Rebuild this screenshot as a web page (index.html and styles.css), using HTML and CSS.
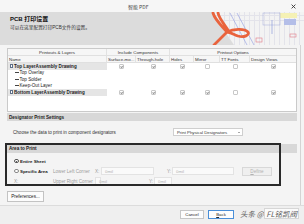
FILE: index.html
```html
<!DOCTYPE html>
<html>
<head>
<meta charset="utf-8">
<title>智能 PDF</title>
<link rel="stylesheet" href="styles.css">
</head>
<body>
<div class="window">
  <div class="titlebar">
    <span class="title">智能 PDF</span>
    <svg class="close" width="5" height="5" viewBox="0 0 5 5"><path d="M0.6 0.6 L4.4 4.4 M4.4 0.6 L0.6 4.4" stroke="#333" stroke-width="0.9" fill="none"/></svg>
  </div>
  <div class="header">
    <div class="header-text">
      <div class="h-title">PCB 打印设置</div>
      <div class="h-sub">可以在这里配置打印PCB文件的设置。</div>
    </div>
    <div class="art">
      <div class="art-light"></div>
      <svg class="art-svg" width="104" height="33" viewBox="0 0 104 33">
        <line x1="30" y1="1" x2="47" y2="33" stroke="#8e9be0" stroke-width="0.6"/>
        <line x1="37" y1="1" x2="54" y2="33" stroke="#8e9be0" stroke-width="0.6"/>
        <rect x="80" y="1" width="17" height="5" fill="#f5f1b4"/>
        <rect x="84" y="7" width="12" height="6" fill="#b4bee8"/>
        <rect x="63" y="1" width="17" height="12" fill="none" stroke="#a2aadb" stroke-width="0.5"/>
        <line x1="72" y1="8" x2="72" y2="22" stroke="#8090d8" stroke-width="0.6"/>
        <rect x="56" y="26" width="6" height="4" fill="none" stroke="#e27a86" stroke-width="0.6"/>
        <rect x="90" y="22" width="6" height="3" fill="none" stroke="#e27a86" stroke-width="0.6"/>
        <path d="M13 1 C15 8 22 14 27 20 M18 1 C19 6 24 12 28 18 M27 20 C33 17 44 16 48 20 C50 23 44 26 38 24 C33 22 29 20 27 20 M27 20 C23 24 18 29 14 33" fill="none" stroke="#e9633d" stroke-width="2.8" stroke-linecap="round" stroke-linejoin="round"/>
      </svg>
    </div>
  </div>
  <div class="content">
    <div class="panel">
      <div class="grid">
        <div class="th c">Printouts &amp; Layers</div>
        <div class="th c span2">Include Components</div>
        <div class="th c span4">Printout Options</div>

        <div class="th">Name</div>
        <div class="th">Surface-mo...</div>
        <div class="th">Through-hole</div>
        <div class="th">Holes</div>
        <div class="th">Mirror</div>
        <div class="th">TT Fonts</div>
        <div class="th last">Design Views</div>

        <div class="td name sel"><span class="tree"></span><b>Top LayerAssembly Drawing</b></div>
        <div class="td cbx"><span class="cb on"></span></div>
        <div class="td cbx"><span class="cb on"></span></div>
        <div class="td cbx"><span class="cb on"></span></div>
        <div class="td cbx"><span class="cb"></span></div>
        <div class="td cbx"><span class="cb"></span></div>
        <div class="td cbx"><span class="cb on"></span></div>

        <div class="td name full"><span class="dash"></span>Top Overlay</div>
        <div class="td name full"><span class="dash"></span>Top Solder</div>
        <div class="td name full"><span class="dash"></span>Keep-Out Layer</div>

        <div class="td name sel"><span class="tree"></span><b>Bottom LayerAssembly Drawing</b></div>
        <div class="td cbx"><span class="cb on"></span></div>
        <div class="td cbx"><span class="cb on"></span></div>
        <div class="td cbx"><span class="cb on"></span></div>
        <div class="td cbx"><span class="cb on"></span></div>
        <div class="td cbx"><span class="cb"></span></div>
        <div class="td cbx"><span class="cb on"></span></div>
      </div>
    </div>

    <div class="bar">Designator Print Settings</div>
    <div class="drow">
      <span>Choose the data to print in component designators</span>
      <div class="select"><span>Print Physical Designators</span><span class="caret"></span></div>
    </div>

    <div class="bar tall">Area to Print</div>
    <div class="area">
      <div class="opt"><span class="radio on"></span><span class="optl">Entire Sheet</span></div>
      <div class="opt r2"><span class="radio"></span><span class="optl">Specific Area</span></div>
      <div class="lbl r2">Lower Left Corner</div>
      <div class="lbl r2">X:</div>
      <div class="inp r2">0mil</div>
      <div class="lbl ylab r2">Y:</div>
      <div class="inp r2">0mil</div>
      <div class="define r2"><u>D</u>efine</div>
      <div class="lbl r3 cB">Upper Right Corner</div>
      <div class="lbl r3">X:</div>
      <div class="inp r3">0mil</div>
      <div class="lbl ylab r3">Y:</div>
      <div class="inp r3">0mil</div>
    </div>

    <button class="btn pref">Preferences...</button>
  </div>
  <div class="footer">
    <button class="fbtn cancel">Cancel</button>
    <button class="fbtn back"><u>B</u>ack</button>
    <span class="wm">头条 @<span class="wm-box">FL铭凯阀</span></span>
  </div>
  <div class="focus-box"></div>
</div>
</body>
</html>
```

FILE: styles.css
```css
* { box-sizing: border-box; margin: 0; padding: 0; }
html, body { width: 304px; height: 224px; overflow: hidden; }
body {
  font-family: "Liberation Sans", "Noto Sans CJK SC", sans-serif;
  font-size: 4.6px;
  color: #222;
  background: #f4f4f4;
}
button { font-family: inherit; font-size: inherit; color: inherit; }
.window { position: relative; width: 304px; height: 224px; display: flex; flex-direction: column; }

.titlebar {
  flex: none; height: 12px; background: #f6f6f6;
  display: flex; align-items: center;
  padding: 0 8px 0 128px;
}
.title { font-size: 5px; color: #444; font-family: "Noto Sans CJK SC", "Liberation Sans", sans-serif; }
.close { margin-left: auto; }

.header {
  flex: none; height: 33px; background: #dcdcdc;
  display: grid; grid-template-columns: 200px 104px;
}
.header-text { padding: 4px 0 0 10px; }
.h-title { font-size: 6px; line-height: 7px; font-weight: bold; color: #111; }
.h-sub { font-size: 4.7px; line-height: 6px; margin-top: 2px; color: #333; }
.art { position: relative; height: 33px; overflow: hidden; }
.art-light {
  height: 33px;
  background:
    repeating-linear-gradient(90deg, transparent 0 4.5px, #e3e3ea 4.5px 5px),
    repeating-linear-gradient(0deg, transparent 0 4.5px, #e3e3ea 4.5px 5px),
    #f3f3f3;
  clip-path: polygon(12px 0, 104px 0, 104px 33px, 34px 33px);
}
.art-svg { position: absolute; left: 0; top: 0; }

.content {
  flex: 1; display: flex; flex-direction: column; align-items: stretch;
  padding: 3px 3px 0 7px; margin-right: 3px;
  border-right: 1px solid #d4d4d4;
}
.panel { height: 64px; border: 1px solid #cacaca; background: #fff; }
.grid {
  display: grid;
  grid-template-columns: 99px 29px 34px 24px 26px 30px 46px;
  grid-template-rows: 7px 7px;
  grid-auto-rows: 6.5px;
}
.th {
  background: #f6f6f6; border-bottom: 1px solid #e0e0e0; border-right: 1px solid #e2e2e2;
  display: flex; align-items: center; padding-left: 1px; color: #333; white-space: nowrap; overflow: hidden;
  font-size: 4.4px;
}
.th.c { justify-content: center; padding-left: 0; }
.th.last { border-right: none; }
.span2 { grid-column: span 2; }
.span4 { grid-column: span 4; border-right: none; }
.td { display: flex; align-items: center; white-space: nowrap; }
.td.name { padding-left: 2px; }
.td.full { grid-column: 1 / -1; }
.td.sel { background: #e5e5e5; }
.td b { font-weight: bold; color: #1c1c1c; }
.tree { width: 3px; height: 4px; border: 0.8px solid #5f6f88; background: #fff; margin-right: 1px; }
.dash { width: 4px; height: 0.8px; background: #444; margin: 0 0.5px 0 5px; }
.cbx { justify-content: center; }
.cb {
  position: relative; width: 5px; height: 5px;
  border: 1px solid #c8c8c8; border-radius: 1px; background: #fff;
}
.cb.on::after {
  content: ""; position: absolute; left: 1.2px; top: 0.3px;
  width: 1.1px; height: 1.8px;
  border: solid #9a9a9a; border-width: 0 0.6px 0.6px 0;
  transform: rotate(45deg);
}

.bar {
  height: 8px; margin-top: 1px; background: #d8d8d8;
  display: flex; align-items: center; padding-left: 2px;
  font-weight: bold; color: #222;
}
.bar.tall { height: 9px; }
.drow {
  height: 22px; display: grid; grid-template-columns: 160px 70px;
  align-items: center; padding-left: 6px; color: #333;
}
.select {
  height: 8px; border: 1px solid #cfcfcf; background: #fff;
  display: flex; align-items: center; justify-content: space-between;
  padding: 0 2px 0 3px; font-size: 4.3px; color: #333;
}
.caret { width: 0; height: 0; border-left: 1.3px solid transparent; border-right: 1.3px solid transparent; border-top: 1.6px solid #555; }

.area {
  display: grid; padding: 3px 0 0 7px;
  grid-template-columns: 39px 42px 6px 53px 18px 62px 8px 30px;
  grid-template-rows: 10px 10px 10px;
  align-items: center;
}
.opt { display: flex; align-items: center; grid-column: 1; }
.opt.r2 { grid-row: 2; }
.optl { color: #222; font-weight: bold; font-size: 4.4px; }
.radio {
  position: relative; width: 4.5px; height: 4.5px; border-radius: 50%;
  border: 0.8px solid #888; background: #fff; margin-right: 1.5px;
}
.radio.on { border-color: #555; }
.radio.on::after {
  content: ""; position: absolute; left: 0.8px; top: 0.8px;
  width: 1.4px; height: 1.4px; border-radius: 50%; background: #222;
}
.r2 { grid-row: 2; }
.r3 { grid-row: 3; }
.cB { grid-column: 2; }
.lbl { color: #9c9c9c; white-space: nowrap; }
.ylab { text-align: right; padding-right: 1px; }
.inp {
  height: 8px; background: #fafafa; border: 1px solid #e3e3e3;
  color: #b0b0b0; padding-left: 3px; display: flex; align-items: center; font-size: 4.3px;
}
.define {
  grid-column: 8; height: 9px; background: #efefef; border: 1px solid #d8d8d8;
  color: #b2b2b2; display: flex; align-items: center; justify-content: center;
}

.btn {
  align-self: flex-start; margin-top: 5px; height: 11px; width: 37px;
  border: 1px solid #c3c3c3; background: #fcfcfc; color: #222;
}

.footer {
  flex: none; height: 19px; background: #efefef; border-top: 1px solid #dcdcdc;
  display: flex; align-items: flex-start; padding: 4px 0 0 180px;
}
.fbtn { height: 9px; background: #fdfdfd; border: 1px solid #c6c6c6; font-size: 4.3px; }
.cancel { width: 24px; }
.back { width: 26px; margin-left: 4px; border-color: #4a8fd8; }
.wm {
  margin: -2px 0 0 6px; display: flex; align-items: center;
  font-family: "Noto Sans CJK SC", sans-serif; font-style: italic;
  font-size: 7.5px; line-height: 11px; color: #5c5c5c; white-space: nowrap;
}
.wm-box { background: #fbfbfb; border: 1px solid #d6d6d6; padding: 0 1px; margin-left: 0.5px; line-height: 9px; }

.focus-box {
  position: absolute; left: 5px; top: 143px; width: 276px; height: 43px;
  border: 2px solid #2a2a2a; pointer-events: none;
}
```
